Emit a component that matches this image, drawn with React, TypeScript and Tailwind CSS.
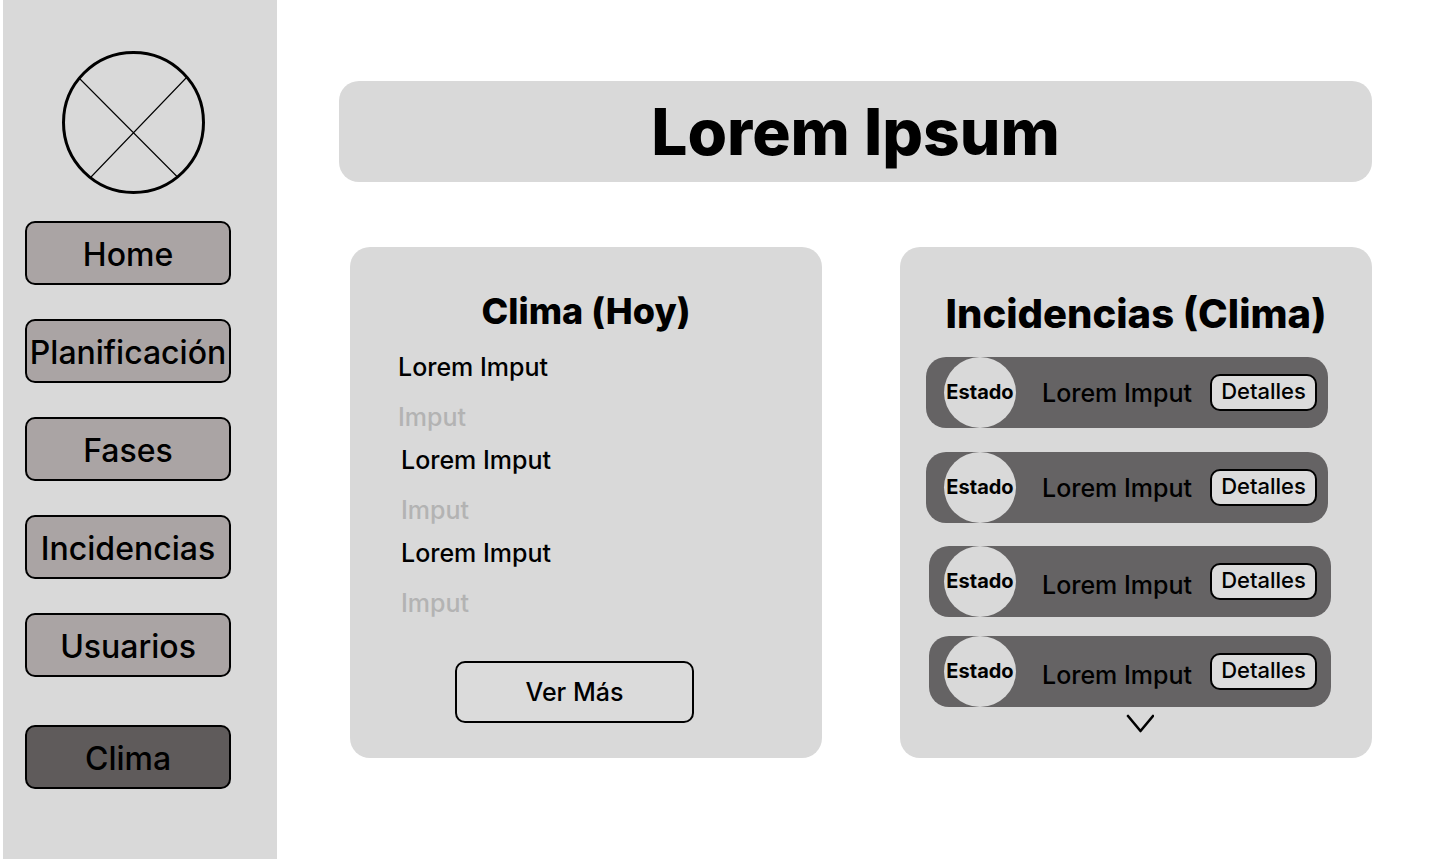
const sections = ["Home", "Planificación", "Fases", "Incidencias", "Usuarios"];

const navItem =
  "flex h-16 items-center justify-center rounded-[10px] border-2 border-black pt-1 text-[32px] leading-10 font-medium";

function Logo() {
  return (
    <svg viewBox="0 0 143 143" className="ml-[37px] size-[143px]" role="img" aria-label="Logo">
      <circle cx="71.5" cy="71.5" r="70" fill="none" stroke="black" strokeWidth="3" />
      <path d="M17.5 27.5 L115.5 126 M125 26 L29 126" stroke="black" strokeWidth="1.1" />
    </svg>
  );
}

function Sidebar() {
  return (
    <aside className="ml-[3px] w-[274px] shrink-0 bg-[#d9d9d9] pt-[51px] pr-[46px] pb-[70px] pl-[22px]">
      <Logo />
      <nav className="mt-[27px]">
        <ul className="flex flex-col gap-[34px]">
          {sections.map((name) => (
            <li key={name}>
              <a href="#" className={`${navItem} bg-[#aaa4a4]`}>
                {name}
              </a>
            </li>
          ))}
        </ul>
        <a href="#" aria-current="page" className={`${navItem} mt-12 bg-[#5f5b5b]`}>
          Clima
        </a>
      </nav>
    </aside>
  );
}

function Weather() {
  return (
    <section className="flex flex-col rounded-[20px] bg-[#d9d9d9] pt-10 pb-[35px]">
      <h2 className="text-center text-[36px] leading-12 font-extrabold">Clima (Hoy)</h2>
      <dl className="mt-[17px] flex flex-col gap-[13px] pl-12 text-[25px] leading-[30px] font-medium">
        {[0, 1, 2].map((item) => (
          <div key={item} className="ml-[3px] flex flex-col gap-5 first:ml-0">
            <dt>Lorem Imput</dt>
            <dd className="text-[#b3b3b3]">Imput</dd>
          </div>
        ))}
      </dl>
      <div className="mt-auto flex justify-center pr-[23px]">
        <button
          type="button"
          className="h-[62px] w-[239px] rounded-[10px] border-2 border-black bg-[#dbdbdb] text-[25px] leading-[30px] font-medium"
        >
          Ver Más
        </button>
      </div>
    </section>
  );
}

function Incident({ rowClass, labelClass }: { rowClass: string; labelClass: string }) {
  return (
    <li className={`flex h-[71px] items-center rounded-[20px] bg-[#656364] ${rowClass}`}>
      <span className="flex h-[71px] w-[72px] shrink-0 items-center justify-center rounded-[50%] bg-[#d9d9d9] pb-0.5 text-[20px] leading-6 font-bold">
        Estado
      </span>
      <span
        className={`ml-[26px] flex-1 text-[25px] leading-[30px] font-medium whitespace-nowrap ${labelClass}`}
      >
        Lorem Imput
      </span>
      <button
        type="button"
        className="h-[37px] w-[107px] shrink-0 rounded-[10px] border-2 border-black bg-[#dbdbdb] pb-1 text-[22px] leading-7 font-medium"
      >
        Detalles
      </button>
    </li>
  );
}

function Incidents() {
  return (
    <section className="flex flex-col rounded-[20px] bg-[#d9d9d9] pt-[43px] pb-[25px]">
      <h2 className="text-center text-[40px] leading-12 font-extrabold whitespace-nowrap">
        Incidencias (Clima)
      </h2>
      <ul className="mt-[19px] mr-[44px] ml-[26px] flex flex-col gap-6">
        <Incident rowClass="pr-[11px] pl-[18px]" labelClass="" />
        <Incident rowClass="pr-[11px] pl-[18px]" labelClass="" />
      </ul>
      <ul className="mt-[23px] mr-[41px] ml-[29px] flex flex-col gap-[19px]">
        <Incident rowClass="pr-[14px] pl-[15px]" labelClass="pt-1.5" />
        <Incident rowClass="pr-[14px] pl-[15px]" labelClass="pt-1.5" />
      </ul>
      <div className="mt-[7px] flex justify-center pl-2">
        <button type="button" aria-label="Mostrar más incidencias">
          <svg width="28" height="19" viewBox="0 0 28 19" fill="none">
            <path
              d="M2 2 L14.5 17 L27 2"
              stroke="black"
              strokeWidth="2.6"
              strokeLinecap="round"
              strokeLinejoin="round"
            />
          </svg>
        </button>
      </div>
    </section>
  );
}

export default function App() {
  return (
    <div className="flex min-h-screen bg-white font-['Inter',sans-serif] text-black">
      <Sidebar />
      <main className="flex-1 pt-[81px] pr-[68px] pb-12 pl-[62px]">
        <h1 className="rounded-[20px] bg-[#d9d9d9] py-3 text-center text-[64px] leading-[77px] font-extrabold">
          Lorem Ipsum
        </h1>
        <div className="mt-[65px] ml-[11px] grid grid-cols-2 gap-[78px]">
          <Weather />
          <Incidents />
        </div>
      </main>
    </div>
  );
}
